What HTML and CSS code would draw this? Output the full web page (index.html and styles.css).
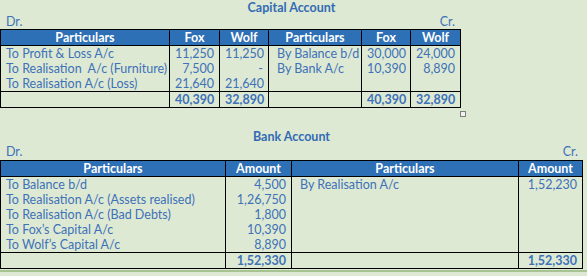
FILE: index.html
```html
<!DOCTYPE html>
<html>
<head>
<meta charset="utf-8">
<link rel="stylesheet" href="styles.css">
</head>
<body>
<div class="page">
  <section class="account capital">
    <div class="title">Capital Account</div>
    <div class="drcr"><span>Dr.</span><span>Cr.</span></div>
    <table class="ledger">
      <colgroup>
        <col class="c169"><col class="c50"><col class="c49">
        <col class="c93"><col class="c49"><col class="c50">
      </colgroup>
      <thead>
        <tr><th>Particulars</th><th>Fox</th><th>Wolf</th><th>Particulars</th><th>Fox</th><th>Wolf</th></tr>
      </thead>
      <tbody>
        <tr><td class="lbl">To Profit &amp; Loss A/c</td><td class="num">11,250</td><td class="num">11,250</td><td class="lbl by">By Balance b/d</td><td class="num">30,000</td><td class="num">24,000</td></tr>
        <tr><td class="lbl">To Realisation&nbsp; A/c (Furniture)</td><td class="num">7,500</td><td class="num">-</td><td class="lbl by">By Bank A/c</td><td class="num">10,390</td><td class="num">8,890</td></tr>
        <tr><td class="lbl">To Realisation A/c (Loss)</td><td class="num">21,640</td><td class="num">21,640</td><td></td><td></td><td></td></tr>
      </tbody>
      <tfoot>
        <tr><td></td><td class="num">40,390</td><td class="num">32,890</td><td></td><td class="num">40,390</td><td class="num">32,890</td></tr>
      </tfoot>
    </table>
    <span class="handle"></span>
  </section>

  <section class="account bank">
    <div class="title">Bank Account</div>
    <div class="drcr"><span>Dr.</span><span>Cr.</span></div>
    <table class="ledger">
      <colgroup>
        <col class="c225"><col class="c66"><col class="c227"><col class="c64">
      </colgroup>
      <thead>
        <tr><th>Particulars</th><th>Amount</th><th>Particulars</th><th>Amount</th></tr>
      </thead>
      <tbody>
        <tr><td class="lbl">To Balance b/d</td><td class="num">4,500</td><td class="lbl by">By Realisation A/c</td><td class="num">1,52,230</td></tr>
        <tr><td class="lbl">To Realisation A/c (Assets realised)</td><td class="num">1,26,750</td><td></td><td></td></tr>
        <tr><td class="lbl">To Realisation A/c (Bad Debts)</td><td class="num">1,800</td><td></td><td></td></tr>
        <tr><td class="lbl">To Fox’s Capital A/c</td><td class="num">10,390</td><td></td><td></td></tr>
        <tr><td class="lbl">To Wolf’s Capital A/c</td><td class="num">8,890</td><td></td><td></td></tr>
      </tbody>
      <tfoot>
        <tr><td></td><td class="num">1,52,330</td><td></td><td class="num">1,52,330</td></tr>
      </tfoot>
    </table>
  </section>
  <div class="gridline"></div>
</div>
</body>
</html>
```

FILE: styles.css
```css
html, body {
  margin: 0;
  padding: 0;
  background: #dde9d3;
}

body {
  font-family: Lato, "Open Sans", "Liberation Sans", sans-serif;
  font-size: 12.5px;
  color: #3d71b8;
  width: 587px;
  height: 276px;
  overflow: hidden;
}

.page {
  width: 587px;
  height: 276px;
  display: flex;
  flex-direction: column;
}

.account {
  position: relative;
  width: 583px;
}

.title {
  text-align: center;
  font-weight: bold;
  color: #336bb3;
  line-height: 15px;
  height: 15px;
}

.drcr {
  display: flex;
  justify-content: space-between;
  padding: 0 5px 0 6px;
  line-height: 14px;
  height: 14px;
}

.capital .drcr {
  width: 449px;
}

.ledger {
  border-collapse: collapse;
  table-layout: fixed;
}

.capital .ledger { width: 461px; }
.bank .ledger { width: 583px; }

.c169 { width: 169px; }
.c50 { width: 50px; }
.c49 { width: 49px; }
.c93 { width: 93px; }
.c225 { width: 225px; }
.c66 { width: 66px; }
.c227 { width: 227px; }
.c64 { width: 64px; }

.ledger th,
.ledger td {
  padding: 0 5px 0 5px;
  height: 15px;
  line-height: 15px;
  white-space: nowrap;
  overflow: hidden;
  border-left: 1px solid #000;
  border-right: 1px solid #000;
}

.ledger th {
  background: #2e70b6;
  color: #ffffff;
  font-weight: bold;
  text-align: center;
  border: 1px solid #000;
}

.ledger td.num {
  text-align: right;
}

.ledger td.by {
  padding-left: 8px;
}

.ledger tfoot td {
  border: 1px solid #000;
  font-weight: bold;
}

.handle {
  position: absolute;
  left: 460px;
  top: 111px;
  width: 4px;
  height: 4px;
  border: 1px solid #7f7f7f;
  background: #f2f2f2;
}

.bank {
  margin-top: 21px;
}

.bank .title {
  height: 16px;
}

.bank .drcr {
  height: 15px;
}

.gridline {
  margin-top: 1px;
  height: 2px;
  background: #a6c391;
}
```
